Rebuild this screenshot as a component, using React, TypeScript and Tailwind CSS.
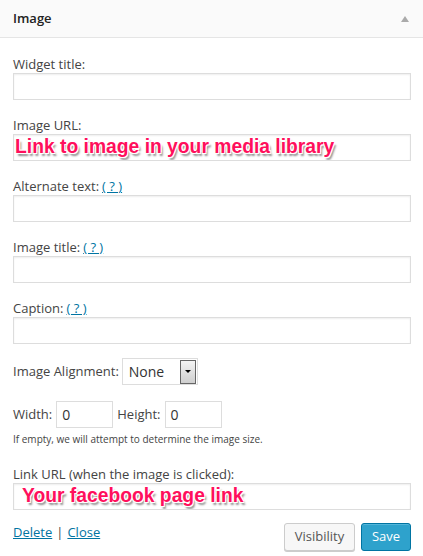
import React from 'react'

const font = { fontFamily: '"Open Sans", "Noto Sans", sans-serif' }

const Help = () => (
    <a href="#" className='text-[#0074a2] underline ml-[3px]'>( ? )</a>
)

const Field = ({ label, help, children }: { label: string, help?: boolean, children?: React.ReactNode }) => (
    <div className='mb-[16px]'>
        <div className='h-[18px] leading-[18px]'>
            {label}{help && <Help />}
        </div>
        <div className='h-[27px] border border-[#dddddd] bg-white shadow-[inset_0_1px_2px_rgba(0,0,0,0.07)] flex items-center overflow-hidden'>
            {children}
        </div>
    </div>
)

const Note = ({ text, pad }: { text: string, pad: string }) => (
    <span
        className={`font-bold text-[19.3px] leading-none text-[#ff0f5c] ${pad} [text-shadow:-1px_-1px_0_#fff,1px_-1px_0_#fff,-1px_1px_0_#fff,1px_1px_0_#fff,2px_3px_2px_rgba(0,0,0,0.45)]`}
        style={{ fontFamily: '"Liberation Sans", Arial, sans-serif' }}
    >
        {text}
    </span>
)

export default function App() {
    return (
        <div className='w-[423px] h-[556px] bg-white text-[13px] text-[#444444] overflow-hidden' style={font}>
            <div className='h-[38px] bg-[#fafafa] border-b border-[#e5e5e5] flex items-center justify-between pl-[13px] pr-[14px]'>
                <span className='font-semibold text-[13px] text-[#222222]'>Image</span>
                <span className='w-0 h-0 border-l-[4px] border-r-[4px] border-b-[6px] border-l-transparent border-r-transparent border-b-[#aaaaaa]' />
            </div>

            <div className='pl-[13px] pr-[12px] pt-[17px]'>
                <Field label='Widget title:' />
                <Field label='Image URL:'>
                    <Note text='Link to image in your media library' pad='pl-[1px] -mt-[2px]' />
                </Field>
                <Field label='Alternate text:' help />
                <Field label='Image title:' help />
                <Field label='Caption:' help />

                <div className='flex items-center gap-[3px] mt-[-2px] mb-[16px]'>
                    <span>Image Alignment:</span>
                    <div className='w-[76px] h-[27px] border border-[#dddddd] bg-white flex items-center justify-between pl-[6px] pr-[1px]'>
                        <span className='text-[14px] text-[#333333]'>None</span>
                        <div className='w-[16px] h-[24px] border border-[#666666] bg-gradient-to-b from-[#f4f4f4] to-[#cfcfcf] flex items-center justify-center'>
                            <span className='w-0 h-0 border-l-[3px] border-r-[3px] border-t-[3px] border-l-transparent border-r-transparent border-t-black' />
                        </div>
                    </div>
                </div>

                <div className='flex items-center h-[27px]'>
                    <span>Width:</span>
                    <div className='ml-[4px] w-[57px] h-[27px] border border-[#dddddd] flex items-center pl-[5px] text-[14px] text-[#333333]'>0</div>
                    <span className='ml-[4px]'>Height:</span>
                    <div className='ml-[4px] w-[57px] h-[27px] border border-[#dddddd] flex items-center pl-[5px] text-[14px] text-[#333333]'>0</div>
                </div>
                <div className='text-[10px] text-[#444444] h-[14px] leading-[14px] mt-[4px] mb-[19px]'>
                    If empty, we will attempt to determine the image size.
                </div>

                <Field label='Link URL (when the image is clicked):'>
                    <Note text='Your facebook page link' pad='pl-[8px] -mt-[2px]' />
                </Field>

                <div className='flex items-start justify-between -mt-[3px]'>
                    <div>
                        <a href="#" className='text-[#0074a2] underline'>Delete</a>
                        <span className='mx-[4px]'>|</span>
                        <a href="#" className='text-[#0074a2] underline'>Close</a>
                    </div>
                    <div className='flex gap-[6px]'>
                        <button className='w-[71px] h-[28px] border border-[#cccccc] bg-[#f7f7f7] rounded-[3px] text-[#555555] shadow-[0_1px_0_#ccc]'>Visibility</button>
                        <button className='w-[50px] h-[28px] border border-[#0074a2] bg-[#2ea2cc] rounded-[3px] text-white shadow-[inset_0_1px_0_rgba(120,200,230,0.5)]'>Save</button>
                    </div>
                </div>
            </div>
        </div>
    )
}
